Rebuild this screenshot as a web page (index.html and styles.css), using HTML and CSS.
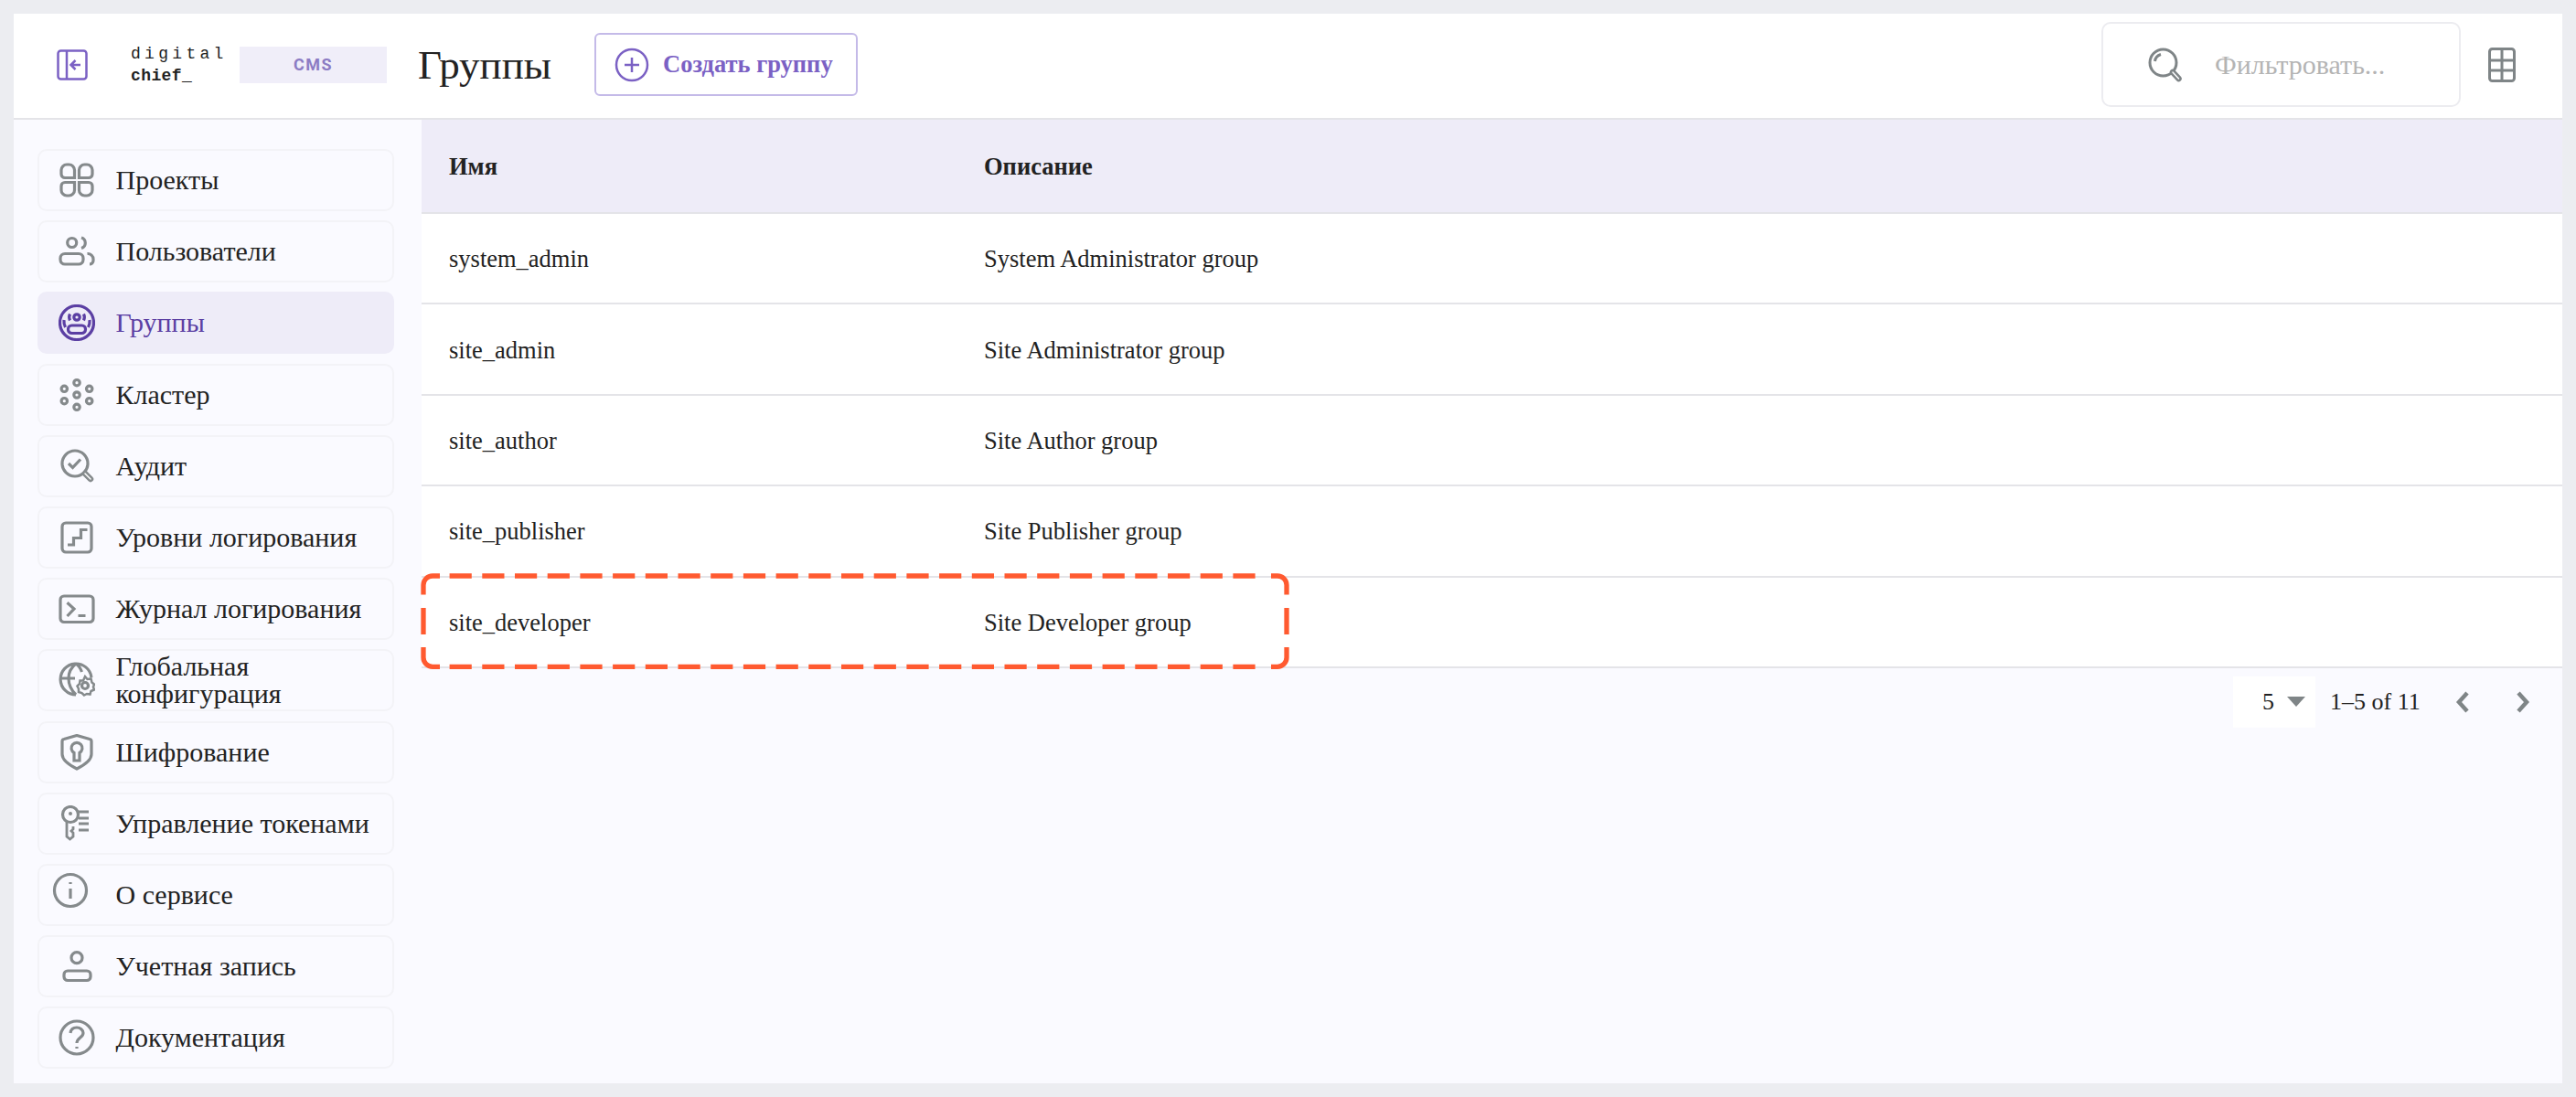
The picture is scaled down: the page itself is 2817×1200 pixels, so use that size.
FILE: index.html
```html
<!DOCTYPE html>
<html lang="en">
<head>
  <meta charset="UTF-8">
  <title>Группы</title>
  <link rel="stylesheet" href="styles.css">
</head>
<body>
  <div class="app">
    <header class="topbar">
      <svg class="collapse-icon" viewBox="0 0 34 34" fill="none"><rect x="1.500" y="1.500" width="31" height="31" rx="3"/><path d="M11 2v30M26 17H16M20.500 12l-5 5 5 5"/></svg>
      <div class="logo"><span class="logo-top">digital</span><span class="logo-bottom">chief_</span></div>
      <div class="cms-tag">CMS</div>
      <h1 class="page-title">Группы</h1>
      <button class="create-btn">
        <svg viewBox="0 0 38 38" fill="none"><circle cx="19" cy="19" r="17"/><path d="M19 11v16M11 19h16"/></svg>
        Создать группу
      </button>
      <div class="search">
        <svg viewBox="0 0 38 38" fill="none"><circle cx="16.500" cy="16.500" r="14.500"/><path d="M7.500 15c.5-4 3-6.500 6.500-7.500"/><path class="handle" d="M27 27l6.500 7"/><path class="handle-in" d="M27 27l6.500 7"/></svg>
        <span class="search-text">Фильтровать...</span>
      </div>
      <svg class="grid-icon" viewBox="0 0 30 38" fill="none"><rect x="1.500" y="1.500" width="27" height="35" rx="3"/><path d="M15 2v34M2 14h26M2 25h26"/></svg>
    </header>

    <div class="layout">
      <nav class="sidebar">
        <a class="nav-item">
          <svg viewBox="0 0 40 40" fill="none"><path d="M17.500 17.500H7a4 4 0 0 1-4-4V9a6 6 0 0 1 6-6h2.500a6 6 0 0 1 6 6zM22.500 17.500H33a4 4 0 0 0 4-4V9a6 6 0 0 0-6-6h-2.500a6 6 0 0 0-6 6zM17.500 22.500H7a4 4 0 0 0-4 4V31a6 6 0 0 0 6 6h2.500a6 6 0 0 0 6-6zM22.500 22.500H33a4 4 0 0 1 4 4V31a6 6 0 0 1-6 6h-2.500a6 6 0 0 1-6-6z"/></svg>
          <span>Проекты</span>
        </a>
        <a class="nav-item">
          <svg viewBox="0 0 40 40" fill="none"><circle cx="14.700" cy="10.500" r="5"/><rect x="2" y="22.500" width="25" height="11.500" rx="5"/><path d="M25 5a6 6 0 0 1 0 11.500M31.500 22.500a6 6 0 0 1 6.500 6v1.500a4 4 0 0 1-4 4"/></svg>
          <span>Пользователи</span>
        </a>
        <a class="nav-item active">
          <svg viewBox="0 0 40 40" fill="none"><circle cx="20" cy="20" r="18.500"/><circle cx="20" cy="14" r="3.200"/><path d="M12.500 10.500a8 8 0 0 0 0 7M27.500 10.500a8 8 0 0 1 0 7M6 17a14 14 0 0 0 1.500 8M34 17a14 14 0 0 1-1.500 8"/><rect x="10.500" y="23" width="19" height="8.500" rx="4"/></svg>
          <span>Группы</span>
        </a>
        <a class="nav-item">
          <svg viewBox="0 0 40 40" fill="none"><circle cx="20" cy="6.700" r="3.200"/><circle cx="6.300" cy="13.300" r="3.200"/><circle cx="33.700" cy="13.300" r="3.200"/><circle cx="20" cy="20" r="3.200"/><circle cx="6.300" cy="26.700" r="3.200"/><circle cx="33.700" cy="26.700" r="3.200"/><circle cx="20" cy="33.300" r="3.200"/></svg>
          <span>Кластер</span>
        </a>
        <a class="nav-item">
          <svg viewBox="0 0 40 40" fill="none"><circle cx="18" cy="17" r="14"/><path d="M11 17l4.500 4.500 8.500-9"/><path class="handle" d="M29 28l6 6"/><path class="handle-in" d="M29 28l6 6"/></svg>
          <span>Аудит</span>
        </a>
        <a class="nav-item">
          <svg viewBox="0 0 40 40" fill="none"><rect x="4" y="4" width="32" height="32" rx="4"/><path d="M10 28h6.500v-7.500h8v-9h7"/></svg>
          <span>Уровни логирования</span>
        </a>
        <a class="nav-item">
          <svg viewBox="0 0 40 40" fill="none"><rect x="2" y="6" width="36" height="28.500" rx="4"/><path d="M9.500 13.300L17 20l-7.500 8M21.500 27.500h8"/></svg>
          <span>Журнал логирования</span>
        </a>
        <a class="nav-item">
          <svg viewBox="0 0 40 40" fill="none"><path d="M19 36a17 17 0 1 1 17-19M2 18h16M19 2c-5 4-8 10-8 16 0 7 3 13 8 18M19 2c3 2 5 5 6.500 9"/><circle cx="29" cy="26" r="3.500"/><path d="M29 16l2.500 3 4-.5 1 4 2.500 2-1 3 1 3-3.500 1.500-1 3.500-3.500-.5-3 1.500-2.500-2.500-3.500-1v-3.500l-1.500-3 2.500-2.500.5-3.500 3.500 0z" stroke-width="2.500"/></svg>
          <span>Глобальная конфигурация</span>
        </a>
        <a class="nav-item">
          <svg viewBox="0 0 40 40" fill="none"><path d="M20 1.500l14 4a2.500 2.500 0 0 1 2 2.500v14c0 7-8 12-16 16-8-4-16-9-16-16V8a2.500 2.500 0 0 1 2-2.500z"/><path d="M17 20.500a6 6 0 1 1 6 0V29h-6z"/></svg>
          <span>Шифрование</span>
        </a>
        <a class="nav-item">
          <svg viewBox="0 0 40 40" fill="none"><circle cx="13" cy="10" r="8.500"/><circle class="dot" cx="13" cy="9" r="2"/><path d="M9 18v16l3.500 3 3.500-3v-4l-2-2 2-2v-3M22 7h11M22 14h11M22 20h11M22 27h11" stroke-width="2.800"/></svg>
          <span>Управление токенами</span>
        </a>
        <a class="nav-item nav-info">
          <svg viewBox="0 0 40 40" fill="none"><circle cx="20" cy="20" r="17.500"/><path d="M20 18v11M20 11v2"/></svg>
          <span>О сервисе</span>
        </a>
        <a class="nav-item">
          <svg viewBox="0 0 40 40" fill="none"><circle cx="20" cy="10.700" r="6"/><rect x="6" y="25" width="29" height="10.500" rx="4"/></svg>
          <span>Учетная запись</span>
        </a>
        <a class="nav-item">
          <svg viewBox="0 0 40 40" fill="none"><circle cx="20" cy="20" r="18"/><path d="M13 15c.5-4 3.500-6 7-6s7 2.500 7 6c0 5-7 5-7 11M20 30v2"/></svg>
          <span>Документация</span>
        </a>
      </nav>

      <main class="content">
        <table class="groups">
          <thead>
            <tr><th class="col-name">Имя</th><th>Описание</th></tr>
          </thead>
          <tbody>
            <tr><td>system_admin</td><td>System Administrator group</td></tr>
            <tr><td>site_admin</td><td>Site Administrator group</td></tr>
            <tr><td>site_author</td><td>Site Author group</td></tr>
            <tr><td>site_publisher</td><td>Site Publisher group</td></tr>
            <tr><td>site_developer</td><td>Site Developer group</td></tr>
          </tbody>
        </table>

        <div class="pager">
          <div class="page-size"><span>5</span><i class="caret"></i></div>
          <span class="page-range">1–5 of 11</span>
          <svg class="chev" viewBox="0 0 16 24" fill="none"><path d="M13 2L4 12l9 10"/></svg>
          <svg class="chev chev-next" viewBox="0 0 16 24" fill="none"><path d="M3 2l9 10-9 10"/></svg>
        </div>

        <!-- red highlight over the last row -->
        <svg class="highlight" viewBox="0 0 950 106" fill="none">
          <path d="M3 23.500V13a10 10 0 0 1 10-10h8M930 3h7a10 10 0 0 1 10 10v10.500M947 81v11.300a10 10 0 0 1-10 10h-7M21 102.300h-8a10 10 0 0 1-10-10V81"/>
          <path d="M31.600 3H921M31.600 102.300H921" stroke-dasharray="24.200 11.500"/>
          <path d="M3 38v29M947 38v29"/>
        </svg>
      </main>
    </div>
  </div>
</body>
</html>
```

FILE: styles.css
```css
* {
  box-sizing: border-box;
}
body {
  margin: 0;
  background-color: #ecedf1;
  font-family: "Liberation Serif", "Times New Roman", serif;
  color: #222;
}
.app {
  margin: 15px;
  width: 2787px;
  height: 1170px;
  display: flex;
  flex-direction: column;
  background-color: #fafaff;
}

/* top bar */
.topbar {
  height: 116px;
  flex-shrink: 0;
  display: flex;
  align-items: center;
  padding: 0 51px 3px 47px;
  background-color: #fff;
  border-bottom: 2px solid #e4e4e8;
}
.collapse-icon {
  width: 34px;
  height: 34px;
  stroke: #7b61c4;
  stroke-width: 2.5;
}
.logo {
  margin-left: 47px;
  width: 106px;
  display: flex;
  flex-direction: column;
  gap: 6px;
  font-family: "Liberation Mono", monospace;
  font-size: 18px;
  line-height: 18px;
  color: #222;
}
.logo-top {
  letter-spacing: 4.3px;
}
.logo-bottom {
  font-weight: bold;
  letter-spacing: 0.4px;
}
.cms-tag {
  margin-left: 13px;
  width: 161px;
  height: 40px;
  display: flex;
  align-items: center;
  justify-content: center;
  background-color: #f0eef9;
  color: #8c7cc4;
  font-family: Roboto, sans-serif;
  font-size: 18px;
  font-weight: bold;
  letter-spacing: 1.4px;
}
.page-title {
  margin: 0 0 0 34px;
  font-size: 45px;
  font-weight: normal;
  color: #222;
}
.create-btn {
  margin-left: 47px;
  width: 288px;
  height: 69px;
  display: flex;
  align-items: center;
  gap: 15px;
  padding: 0 0 0 20px;
  background-color: #fff;
  border: 2px solid #c4bae8;
  border-radius: 6px;
  font-family: inherit;
  font-size: 26.5px;
  font-weight: bold;
  color: #7b61c4;
}
.create-btn svg {
  width: 38px;
  height: 38px;
  stroke: #7b61c4;
  stroke-width: 2.5;
}
.search {
  margin-left: auto;
  width: 393px;
  height: 93px;
  display: flex;
  align-items: center;
  gap: 35px;
  padding-left: 49px;
  border: 2px solid #ececf0;
  border-radius: 10px;
}
.search svg {
  width: 38px;
  height: 38px;
  stroke: #7f8587;
  stroke-width: 3;
}
.search svg .handle,
.nav-item svg .handle {
  stroke-width: 6.5;
  stroke-linecap: round;
}
.search svg .handle-in,
.nav-item svg .handle-in {
  stroke-width: 1.5;
  stroke-linecap: round;
  stroke: #fff;
}
.search-text {
  font-size: 30px;
  color: #b4b4b4;
}
.grid-icon {
  margin-left: 30px;
  width: 30px;
  height: 38px;
  stroke: #7f8587;
  stroke-width: 3;
}

/* sidebar */
.layout {
  flex: 1;
  display: flex;
  min-height: 0;
}
.sidebar {
  width: 446px;
  flex-shrink: 0;
  display: flex;
  flex-direction: column;
  gap: 10.2px;
  padding: 32px 0 0 26px;
}
.nav-item {
  width: 390px;
  height: 68px;
  display: flex;
  align-items: center;
  gap: 22.5px;
  padding-left: 21px;
  border: 2px solid #f3f3f7;
  border-radius: 10px;
  font-size: 30px;
  line-height: 30px;
  color: #222;
}
.nav-item svg {
  width: 40px;
  height: 40px;
  flex-shrink: 0;
  stroke: #858a8c;
  stroke-width: 3.2;
}
.nav-item svg .dot {
  fill: #858a8c;
  stroke: none;
}
.nav-item.active {
  background-color: #eeecf8;
  border-color: #eeecf8;
  color: #5b3fa3;
}
.nav-item.active svg {
  stroke: #5b3fa3;
}
.nav-info svg {
  margin: -10px 7px 0 -7px;
}

/* table */
.content {
  position: relative;
  flex: 1;
  min-width: 0;
}
.groups {
  width: 100%;
  table-layout: fixed;
  border-collapse: collapse;
  font-size: 26.5px;
}
.groups th {
  height: 102px;
  padding: 2px 0 0 30px;
  text-align: left;
  background-color: #eeecf8;
  border-bottom: 2px solid #e4e4e8;
  color: #222;
}
.groups .col-name {
  width: 585px;
}
.groups td {
  height: 99.4px;
  padding: 2px 0 0 30px;
  background-color: #fff;
  border-bottom: 2px solid #e4e4e8;
}

/* pagination */
.pager {
  display: flex;
  align-items: center;
  height: 56px;
  margin-top: 9px;
  padding-left: 1981px;
  font-size: 26px;
}
.page-size {
  width: 90px;
  height: 56px;
  display: flex;
  align-items: center;
  gap: 14px;
  padding-left: 32px;
  background-color: #fff;
}
.caret {
  width: 0;
  height: 0;
  border-left: 10px solid transparent;
  border-right: 10px solid transparent;
  border-top: 11px solid #7f8587;
}
.page-range {
  margin-left: 16px;
}
.chev {
  margin-left: 38px;
  width: 16px;
  height: 24px;
  stroke: #7f8587;
  stroke-width: 4.5;
}
.chev-next {
  margin-left: 50px;
}
.highlight {
  position: absolute;
  left: -1px;
  top: 496px;
  width: 950px;
  height: 106px;
  stroke: #ff5a30;
  stroke-width: 5.3;
}
```
